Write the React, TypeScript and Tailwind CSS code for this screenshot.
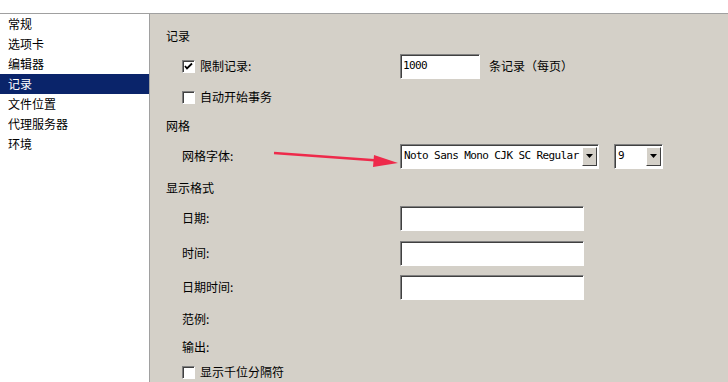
import clsx from 'clsx'

const cjk = { fontFamily: '"Noto Sans CJK SC", "Liberation Sans", sans-serif' }
const mono = { fontFamily: '"DejaVu Sans Mono", monospace', letterSpacing: '-0.6px' }

const NAV_ITEMS = ['常规', '选项卡', '编辑器', '记录', '文件位置', '代理服务器', '环境']

function Checkbox({ checked }: { checked?: boolean }) {
  return (
    <span className="flex h-[13px] w-[13px] shrink-0 items-center justify-center border border-t-[#808080] border-l-[#808080] border-b-white border-r-white bg-white shadow-[inset_1px_1px_0_#404040]">
      {checked && (
        <svg width="9" height="9" viewBox="0 0 9 9">
          <path d="M1 4 L3 6.5 L8 1.5" stroke="#000" strokeWidth="1.8" fill="none" />
        </svg>
      )}
    </span>
  )
}

function TextBox({ value, className }: { value?: string; className?: string }) {
  return (
    <div
      className={clsx(
        'flex h-[25px] items-center border border-t-[#808080] border-l-[#808080] border-b-white border-r-white bg-white pl-[2px] text-[11px] text-black shadow-[inset_1px_1px_0_#404040]',
        className,
      )}
      style={mono}
    >
      {value}
    </div>
  )
}

function Select({ value, className }: { value: string; className?: string }) {
  return (
    <div
      className={clsx(
        'flex h-[25px] items-center border border-t-[#808080] border-l-[#808080] border-b-white border-r-white bg-white p-[1px] shadow-[inset_1px_1px_0_#404040]',
        className,
      )}
    >
      <span className="flex-1 overflow-hidden whitespace-nowrap pl-[2px] text-[11px] text-black" style={mono}>
        {value}
      </span>
      <span className="flex h-[19px] w-[15px] shrink-0 items-center justify-center border border-t-white border-l-white border-b-[#404040] border-r-[#404040] bg-[#d4d0c8]">
        <svg width="7" height="4" viewBox="0 0 7 4">
          <path d="M0 0 H7 L3.5 4 Z" fill="#000" />
        </svg>
      </span>
    </div>
  )
}

export default function App() {
  return (
    <div className="relative flex h-[382px] w-[728px] flex-col overflow-hidden bg-white text-[12px] text-black" style={cjk}>
      <div className="h-[14px] border-b border-[#a0a0a0] bg-white" />

      <div className="flex flex-1">
        <ul className="w-[150px] border-r border-[#a0a0a0] bg-white">
          {NAV_ITEMS.map((item) => (
            <li
              key={item}
              className={clsx('flex h-[20px] items-center pl-[8px]', {
                'bg-[#0a246a] text-white': item === '记录',
              })}
            >
              {item}
            </li>
          ))}
        </ul>

        <div className="flex flex-1 flex-col bg-[#d4d0c8] pl-[16px] pt-[12px]">
          <div className="flex h-[20px] items-center">记录</div>

          <div className="mt-[8px] flex h-[24px] items-center pl-[16px]">
            <div className="flex w-[218px] items-center gap-[5px]">
              <Checkbox checked />
              <span>限制记录:</span>
            </div>
            <TextBox value="1000" className="w-[80px]" />
            <span className="ml-[9px]">条记录（每页）</span>
          </div>

          <div className="mt-[9px] flex h-[20px] items-center gap-[5px] pl-[16px]">
            <Checkbox />
            <span>自动开始事务</span>
          </div>

          <div className="mt-[9px] flex h-[20px] items-center">网格</div>

          <div className="mt-[8px] flex h-[24px] items-center pl-[16px]">
            <span className="w-[218px]">网格字体:</span>
            <Select value="Noto Sans Mono CJK SC Regular" className="w-[199px]" />
            <Select value="9" className="ml-[15px] w-[49px]" />
          </div>

          <div className="mt-[10px] flex h-[20px] items-center">显示格式</div>

          <div className="mt-[8px] flex h-[24px] items-center pl-[16px]">
            <span className="w-[218px]">日期:</span>
            <TextBox className="w-[184px]" />
          </div>

          <div className="mt-[11px] flex h-[24px] items-center pl-[16px]">
            <span className="w-[218px]">时间:</span>
            <TextBox className="w-[184px]" />
          </div>

          <div className="mt-[10px] flex h-[24px] items-center pl-[16px]">
            <span className="w-[218px]">日期时间:</span>
            <TextBox className="w-[184px]" />
          </div>

          <div className="mt-[10px] flex h-[20px] items-center pl-[16px]">范例:</div>
          <div className="mt-[8px] flex h-[20px] items-center pl-[16px]">输出:</div>

          <div className="mt-[5px] flex h-[20px] items-center gap-[5px] pl-[16px]">
            <Checkbox />
            <span>显示千位分隔符</span>
          </div>
        </div>
      </div>

      {/* annotation arrow */}
      <svg className="pointer-events-none absolute left-0 top-0" width="728" height="382">
        <line x1="274" y1="153" x2="378" y2="160.5" stroke="#ee2a4b" strokeWidth="2.5" />
        <path d="M374 155 L398 163 L373 167 Z" fill="#ee2a4b" />
      </svg>
    </div>
  )
}
